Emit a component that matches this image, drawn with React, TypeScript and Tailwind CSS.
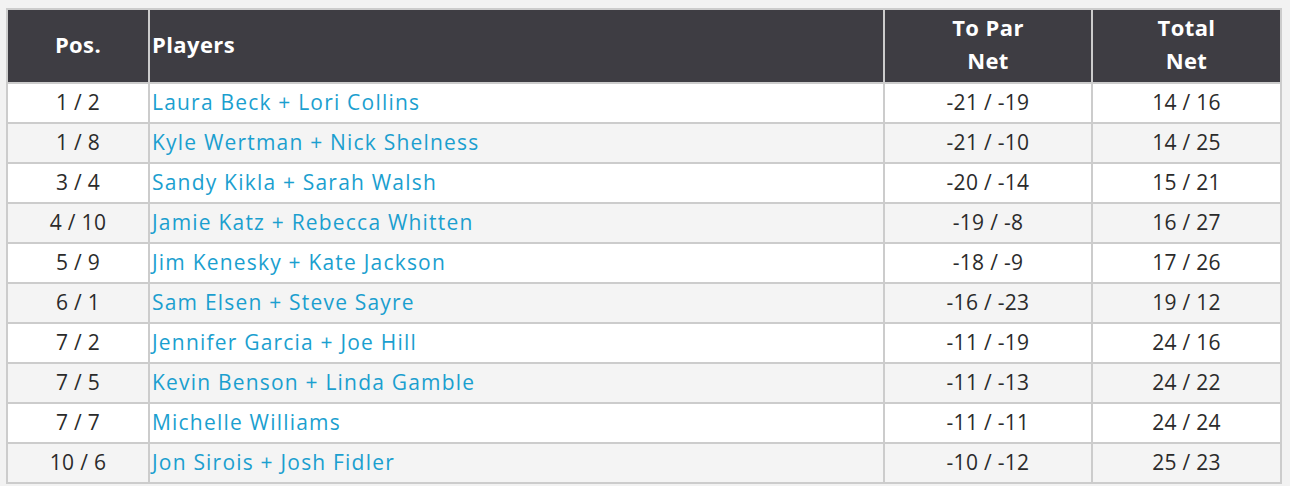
import React from "react";

type Row = { pos: string; players: string; toPar: string; total: string };

const rows: Row[] = [
  { pos: "1 / 2", players: "Laura Beck + Lori Collins", toPar: "-21 / -19", total: "14 / 16" },
  { pos: "1 / 8", players: "Kyle Wertman + Nick Shelness", toPar: "-21 / -10", total: "14 / 25" },
  { pos: "3 / 4", players: "Sandy Kikla + Sarah Walsh", toPar: "-20 / -14", total: "15 / 21" },
  { pos: "4 / 10", players: "Jamie Katz + Rebecca Whitten", toPar: "-19 / -8", total: "16 / 27" },
  { pos: "5 / 9", players: "Jim Kenesky + Kate Jackson", toPar: "-18 / -9", total: "17 / 26" },
  { pos: "6 / 1", players: "Sam Elsen + Steve Sayre", toPar: "-16 / -23", total: "19 / 12" },
  { pos: "7 / 2", players: "Jennifer Garcia + Joe Hill", toPar: "-11 / -19", total: "24 / 16" },
  { pos: "7 / 5", players: "Kevin Benson + Linda Gamble", toPar: "-11 / -13", total: "24 / 22" },
  { pos: "7 / 7", players: "Michelle Williams", toPar: "-11 / -11", total: "24 / 24" },
  { pos: "10 / 6", players: "Jon Sirois + Josh Fidler", toPar: "-10 / -12", total: "25 / 23" },
];

export default function App() {
  return (
    <div
      className="min-h-[486px] bg-[#f2f2f2] pt-2 pl-[6px] pr-2"
      style={{ fontFamily: "'Open Sans', Lato, sans-serif" }}
    >
      <table className="w-[1276px] border-collapse border-2 border-[#cccccc] text-[21px] leading-[24px] tracking-[0.3px]">
        <thead>
          <tr className="bg-[#3e3d43] text-white h-[74px] text-[22px] tracking-[0.4px]">
            <th className="w-[142px] border-2 border-[#cccccc] text-center font-bold pb-[5px]">Pos.</th>
            <th className="border-2 border-[#cccccc] text-left font-bold pl-[2px] pb-[5px]">Players</th>
            <th className="w-[208px] border-2 border-[#cccccc] text-center font-bold leading-[33px] pb-[5px]">
              To Par
              <br />
              Net
            </th>
            <th className="w-[189px] border-2 border-[#cccccc] text-center font-bold leading-[33px] pb-[5px]">
              Total
              <br />
              Net
            </th>
          </tr>
        </thead>
        <tbody>
          {rows.map((r, i) => (
            <tr key={i} className={i % 2 === 0 ? "bg-white h-10" : "bg-[#f4f4f4] h-10"}>
              <td className="border-2 border-[#cccccc] text-center text-[#2b2b2b] pb-[3px]">{r.pos}</td>
              <td className="border-2 border-[#cccccc] pl-[2px] pb-[3px]">
                <a href="#" className="text-[#1b9fcf] tracking-[1.2px]">
                  {r.players}
                </a>
              </td>
              <td className="border-2 border-[#cccccc] text-center text-[#2b2b2b] pb-[3px]">{r.toPar}</td>
              <td className="border-2 border-[#cccccc] text-center text-[#2b2b2b] pb-[3px]">{r.total}</td>
            </tr>
          ))}
        </tbody>
      </table>
    </div>
  );
}
